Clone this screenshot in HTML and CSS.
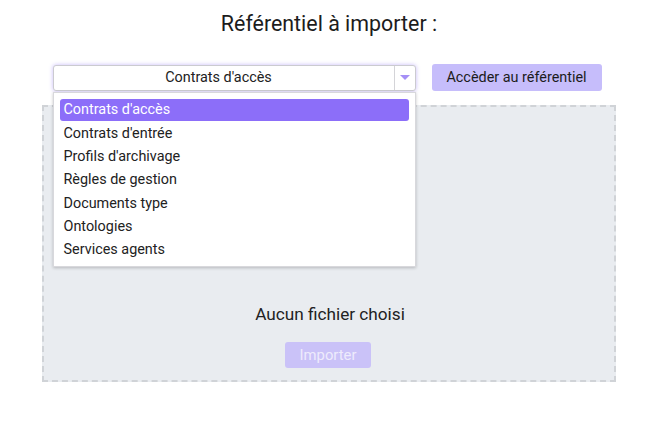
FILE: index.html
```html
<!DOCTYPE html>
<html lang="fr">
<head>
<meta charset="utf-8">
<link rel="stylesheet" href="styles.css">
</head>
<body>
<div class="page">
  <h1 class="title">Référentiel à importer :</h1>
  <div class="toolbar">
    <div class="select-wrap">
      <div class="select">
        <span class="select-value">Contrats d'accès</span>
        <span class="select-arrow"><span class="tri"></span></span>
      </div>
      <ul class="menu">
        <li class="item active">Contrats d'accès</li>
        <li class="item">Contrats d'entrée</li>
        <li class="item">Profils d'archivage</li>
        <li class="item">Règles de gestion</li>
        <li class="item">Documents type</li>
        <li class="item">Ontologies</li>
        <li class="item">Services agents</li>
      </ul>
    </div>
    <button class="btn-access">Accèder au référentiel</button>
  </div>
  <div class="dropzone">
    <div class="file-name">Aucun fichier choisi</div>
    <button class="btn-import">Importer</button>
  </div>
</div>
</body>
</html>
```
FILE: styles.css
```css
* { box-sizing: border-box; }
html, body { margin: 0; padding: 0; background: #fff; }
body { font-family: Roboto, "Liberation Sans", sans-serif; color: #222; }
.page { width: 654px; height: 427px; padding-top: 12px; }
.title { margin: 0; text-align: center; font-size: 21.4px; font-weight: 400; line-height: 24px; color: #1c1c1c; padding-left: 4px; }
.toolbar { display: flex; align-items: center; justify-content: center; gap: 16px; margin-top: 28px; }
.select-wrap { position: relative; width: 363px; }
.select { height: 26px; display: flex; border: 1px solid #cbcbd0; border-radius: 3px; background: #fff; box-shadow: 0 0 4px rgba(130, 100, 245, 0.45); }
.select-value { flex: 1; text-align: center; font-size: 14.4px; line-height: 24px; color: #222; padding-right: 10px; }
.select-arrow { width: 21px; border-left: 1px solid #d4d4d8; display: flex; align-items: center; justify-content: center; }
.tri { width: 0; height: 0; border-left: 5px solid transparent; border-right: 5px solid transparent; border-top: 5px solid #a58ff6; margin-left: 1px; }
.menu { position: absolute; top: 27px; left: 0; right: 0; margin: 0; list-style: none; padding: 6px 6px 4px; background: #fff; border: 1px solid #d8d8dc; box-shadow: 0 1px 3px rgba(0,0,0,0.22); z-index: 2; }
.item { height: 23.3px; line-height: 23.3px; font-size: 14.4px; padding-left: 4px; color: #222; }
.item.active { background: #8c6ef9; color: #fff; border-radius: 3px; height: 22.3px; line-height: 22.3px; margin-bottom: 1px; }
.btn-access { width: 170px; height: 27px; border: none; border-radius: 3px; background: #c6bdfb; font-family: Roboto, "Liberation Sans", sans-serif; font-size: 14.4px; color: #1c1c1c; padding: 0; }
.dropzone { margin: 14px 0 0 42px; width: 574px; height: 277px; background: #e9ecf0; border: 2px dashed #d0d3d7; display: flex; flex-direction: column; align-items: center; padding-top: 197px; }
.file-name { font-size: 17.2px; line-height: 20px; color: #222; padding-left: 2px; }
.btn-import { margin-top: 18px; width: 86px; height: 26px; border: none; border-radius: 3px; background: #cac2f8; color: #eeebfc; font-family: Roboto, "Liberation Sans", sans-serif; font-size: 14.8px; padding: 0; margin-right: 2px; }
```
